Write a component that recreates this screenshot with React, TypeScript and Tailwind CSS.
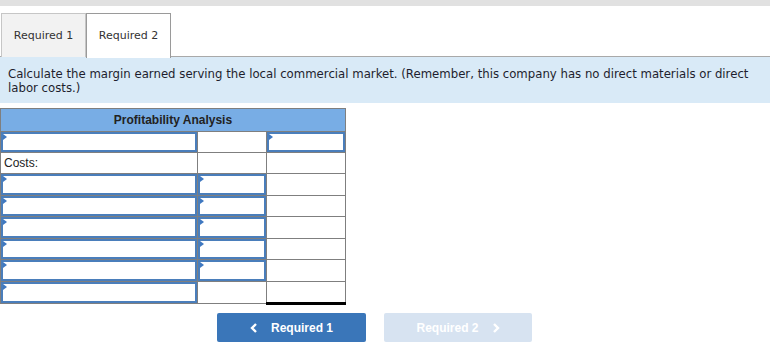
import React from "react";

const Tri = () => (
  <span className="absolute left-0 top-0 w-0 h-0 border-t-[3px] border-b-[3px] border-l-[4px] border-t-transparent border-b-transparent border-l-[#3f78c0]" />
);

const Inp = () => (
  <div className="relative h-full w-full border-2 border-[#4a7ebb] bg-white">
    <Tri />
  </div>
);

type Cell = "inp" | "empty" | "costs" | "black" | "blackdouble";

const rows: { h: number; cells: Cell[] }[] = [
  { h: 21, cells: ["inp", "empty", "inp"] },
  { h: 21, cells: ["costs", "empty", "empty"] },
  { h: 22, cells: ["inp", "inp", "empty"] },
  { h: 21, cells: ["inp", "inp", "empty"] },
  { h: 22, cells: ["inp", "inp", "empty"] },
  { h: 21, cells: ["inp", "inp", "empty"] },
  { h: 22, cells: ["inp", "inp", "empty"] },
  { h: 22, cells: ["inp", "black", "blackdouble"] },
];

export default function App() {
  return (
    <div className="w-[770px] h-[356px] bg-white relative overflow-hidden" style={{ fontFamily: '"DejaVu Sans", Verdana, sans-serif' }}>
      <div className="h-[6px] bg-[#e1e1e1]" />
      <div className="h-[7px]" />
      <div className="flex h-[44px] border-b border-[#a9a9a9] pl-[1px]">
        <div className="w-[85px] h-[44px] bg-[#f2f2f2] border border-[#c6c6c6] border-b-0 flex items-center justify-center pt-[1px] text-[11px] text-[#333]">
          Required 1
        </div>
        <div className="w-[85px] h-[45px] bg-white border border-[#9a9a9a] border-b-0 flex items-center justify-center pt-[1px] text-[11px] text-[#333]">
          Required 2
        </div>
      </div>
      <div className="bg-[#d9eaf7] h-[46px] pl-[8px] pt-[10px] text-[11.73px] leading-[14px] text-[#1e1e2e]">
        Calculate the margin earned serving the local commercial market. (Remember, this company has no direct materials or direct labor costs.)
      </div>
      <div className="h-[5px]" />
      <table className="border-collapse w-[346px]" style={{ fontFamily: '"Liberation Sans", Arial, sans-serif' }}>
        <colgroup>
          <col className="w-[198px]" />
          <col className="w-[69px]" />
          <col className="w-[79px]" />
        </colgroup>
        <tbody>
          <tr className="h-[23px]">
            <td colSpan={3} className="border border-[#7f7f7f] bg-[#78ade5] text-center text-[12px] font-bold text-[#222] p-0">
              Profitability Analysis
            </td>
          </tr>
          {rows.map((r, i) => (
            <tr key={i} style={{ height: r.h }}>
              {r.cells.map((c, j) => {
                if (c === "inp")
                  return (
                    <td key={j} className="border border-[#7f7f7f] p-0 h-px">
                      <Inp />
                    </td>
                  );
                if (c === "costs")
                  return (
                    <td key={j} className="border border-[#7f7f7f] px-[3px] py-0 text-[12px] text-[#222]">
                      Costs:
                    </td>
                  );
                if (c === "black")
                  return <td key={j} className="border border-[#7f7f7f] border-t-black p-0" />;
                if (c === "blackdouble")
                  return <td key={j} className="border border-[#7f7f7f] border-t-black border-b-[3px] border-b-black p-0" />;
                return <td key={j} className="border border-[#7f7f7f] p-0" />;
              })}
            </tr>
          ))}
        </tbody>
      </table>
      <div className="flex mt-[8px] pl-[217px] gap-[18px]" style={{ fontFamily: '"Liberation Sans", Arial, sans-serif' }}>
        <button className="w-[149px] h-[29px] bg-[#3a76b9] rounded-[2px] text-white text-[12px] font-bold flex items-center justify-center gap-[13px]">
          <svg width="8" height="10" viewBox="0 0 8 10">
            <polyline points="6,1 2,5 6,9" fill="none" stroke="white" strokeWidth="2.4" />
          </svg>
          Required 1
        </button>
        <button className="w-[148px] h-[29px] bg-[#d7e3f1] rounded-[2px] text-white text-[12px] font-bold flex items-center justify-center gap-[13px]">
          Required 2
          <svg width="8" height="10" viewBox="0 0 8 10">
            <polyline points="2,1 6,5 2,9" fill="none" stroke="white" strokeWidth="2.4" />
          </svg>
        </button>
      </div>
    </div>
  );
}
